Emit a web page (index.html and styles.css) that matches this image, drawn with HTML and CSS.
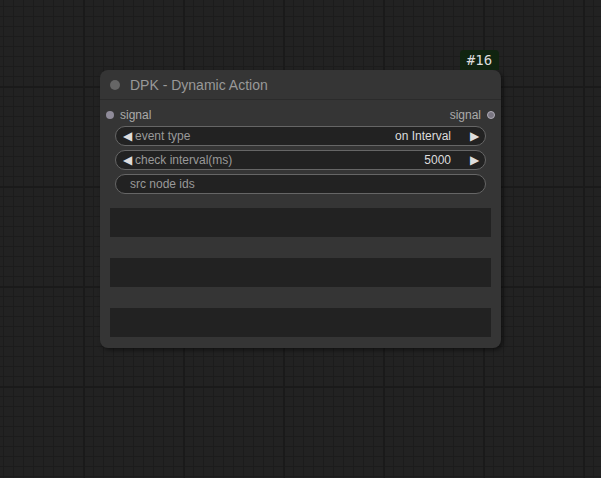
FILE: index.html
```html
<!DOCTYPE html>
<html>
<head>
<meta charset="utf-8">
<link rel="stylesheet" href="styles.css">
</head>
<body>
<div class="canvas">
  <div class="node">
    <div class="badge">#16</div>
    <div class="title">
      <span class="title-dot"></span>
      <span class="title-text">DPK - Dynamic Action</span>
    </div>
    <div class="body">
      <div class="slots">
        <div class="slot in"><span class="slot-dot"></span><span>signal</span></div>
        <div class="slot out"><span>signal</span><span class="slot-dot"></span></div>
      </div>
      <div class="widgets">
        <div class="widget">
          <span class="arrow">&#9664;</span>
          <span class="label">event type</span>
          <span class="value">on Interval</span>
          <span class="arrow">&#9654;</span>
        </div>
        <div class="widget">
          <span class="arrow">&#9664;</span>
          <span class="label">check interval(ms)</span>
          <span class="value">5000</span>
          <span class="arrow">&#9654;</span>
        </div>
        <div class="widget text">
          <span class="label">src node ids</span>
        </div>
      </div>
      <div class="boxes">
        <div class="box"></div>
        <div class="box"></div>
        <div class="box"></div>
      </div>
    </div>
  </div>
</div>
</body>
</html>
```

FILE: styles.css
```css
html, body {
  margin: 0;
  padding: 0;
}
body {
  width: 601px;
  height: 478px;
  overflow: hidden;
  background-color: #222222;
  font-family: "Liberation Sans", Arial, sans-serif;
}
.canvas {
  position: relative;
  width: 601px;
  height: 478px;
  background-color: #222222;
  background-image:
    linear-gradient(to right, #1a1a1a 2px, transparent 2px),
    linear-gradient(to bottom, #1a1a1a 2px, transparent 2px),
    linear-gradient(to right, #1c1c1c 1px, transparent 1px),
    linear-gradient(to bottom, #1c1c1c 1px, transparent 1px);
  background-size: 100px 100px, 100px 100px, 10px 10px, 10px 10px;
  background-position: 83px 0, 0 86px, 3px 0, 0 6px;
}
.node {
  position: absolute;
  left: 100px;
  top: 70px;
  width: 401px;
  height: 278px;
  background: #353535;
  border-radius: 8px;
  box-shadow: 2px 2px 4px rgba(0,0,0,0.5);
}
.badge {
  position: absolute;
  right: 2px;
  top: -20px;
  height: 20px;
  width: 39px;
  text-align: center;
  background: #102410;
  color: #dddddd;
  font-family: "DejaVu Sans Mono", monospace;
  font-size: 14px;
  line-height: 20px;
  border-radius: 4px 4px 0 0;
}
.title {
  height: 30px;
  display: flex;
  align-items: center;
  border-bottom: 1px solid #2b2b2b;
  box-sizing: border-box;
}
.title-dot {
  width: 10px;
  height: 10px;
  border-radius: 50%;
  background: #666666;
  margin-left: 10px;
}
.title-text {
  margin-left: 10px;
  color: #999999;
  font-size: 14px;
}
.body {
  padding: 0 10px;
}
.slots {
  display: flex;
  justify-content: space-between;
  height: 26px;
  align-items: center;
  margin-top: 2px;
}
.slot {
  display: flex;
  align-items: center;
  gap: 6px;
  color: #aaaaaa;
  font-size: 12px;
}
.slot-dot {
  width: 8px;
  height: 8px;
  border-radius: 50%;
  background: #8f8b99;
  box-sizing: border-box;
}
.slot.in .slot-dot {
  margin-left: -4px;
}
.slot.out .slot-dot {
  background: #7a7682;
  border: 1px solid #b0adb8;
  margin-right: -4px;
}
.widgets {
  display: flex;
  flex-direction: column;
  gap: 4px;
  padding: 0 5px;
  margin-top: -2px;
}
.widget {
  height: 20px;
  box-sizing: border-box;
  border: 1px solid #666666;
  border-radius: 10px;
  background: #222222;
  display: flex;
  align-items: center;
  padding: 0 5px;
  font-size: 12px;
}
.widget .arrow {
  color: #dddddd;
  font-size: 12px;
  width: 12px;
  text-align: center;
  line-height: 18px;
}
.widget .label {
  color: #999999;
  margin-left: 2px;
  flex: 1;
}
.widget .value {
  color: #dddddd;
  margin-right: 17px;
}
.widget.text .label {
  margin-left: 9px;
}
.boxes {
  display: flex;
  flex-direction: column;
  gap: 21px;
  margin-top: 14px;
}
.box {
  height: 29px;
  background: #222222;
}
```
